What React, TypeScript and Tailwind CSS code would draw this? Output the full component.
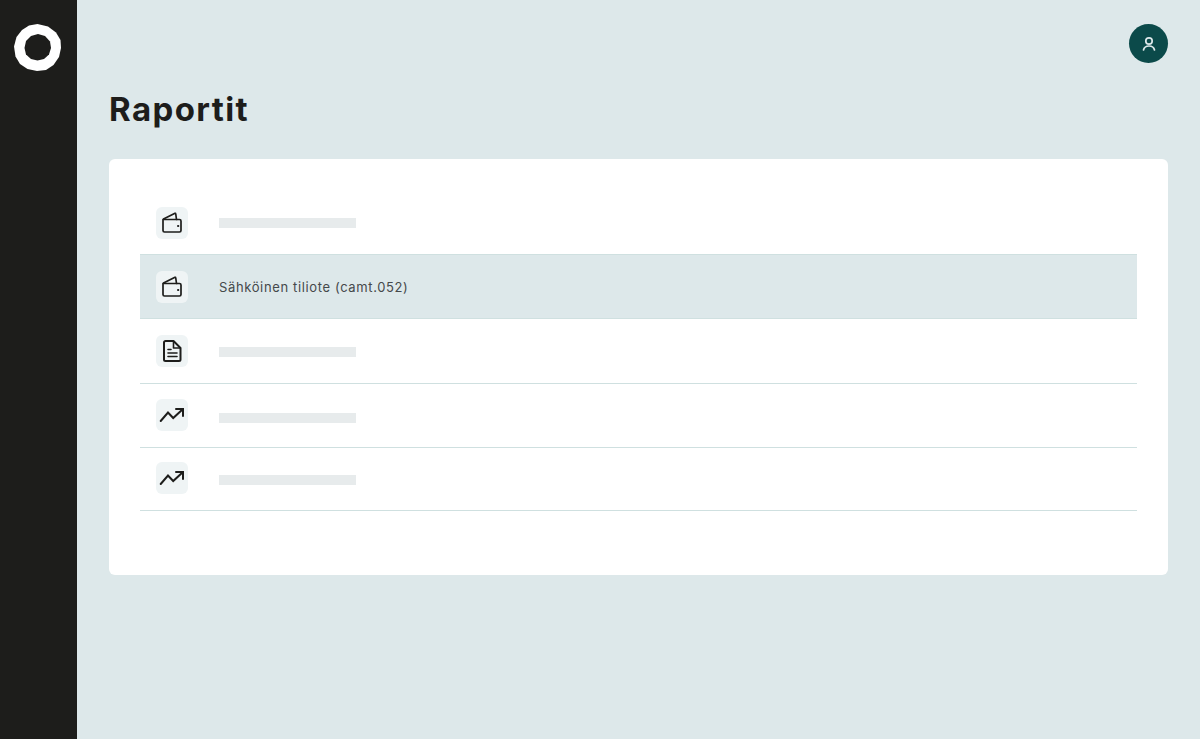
import React from "react";

const Wallet = () => (
  <svg width="22" height="22" viewBox="0 0 22 22" fill="none" stroke="#1d1d1b" strokeWidth="1.7" strokeLinejoin="round" strokeLinecap="round">
    <path d="M2 7.500v11a1.500 1.500 0 0 0 1.500 1.500h15a1.500 1.500 0 0 0 1.500-1.500v-9.500a1.500 1.500 0 0 0-1.500-1.500H3a1 1 0 0 0-1 .5Z" />
    <path d="M2.500 7 14 1.300a.5.5 0 0 1 .7.400L15.500 7.500" />
    <path d="M17 14h.3" strokeWidth="2" />
  </svg>
);

const Doc = () => (
  <svg width="22" height="22" viewBox="0 0 22 22" fill="none" stroke="#1d1d1b" strokeWidth="2" strokeLinejoin="round" strokeLinecap="round">
    <path d="M3 2.500A1.500 1.500 0 0 1 4.500 1H12.500L19.500 8V19.500A1.500 1.500 0 0 1 18 21H4.500A1.500 1.500 0 0 1 3 19.500Z" />
    <path d="M12.500 1.500V8H19" strokeWidth="1.600" />
    <path d="M7 9.500h3M7 13h9M7 16.500h9" strokeWidth="1.600" />
  </svg>
);

const Trend = () => (
  <svg width="26" height="26" viewBox="0 0 26 26" fill="none" stroke="#1d1d1b" strokeWidth="2" strokeLinejoin="miter" strokeLinecap="round">
    <path d="M1.700 19 9 10.500l5.200 5.500L24 7" />
    <path d="M17 7h7v7" />
  </svg>
);

function Row({
  icon,
  label,
  active,
  rowClass,
  iconClass,
  barClass,
}: {
  icon: React.ReactNode;
  label?: string;
  active?: boolean;
  rowClass: string;
  iconClass: string;
  barClass?: string;
}) {
  return (
    <div className={`flex items-start gap-[31px] border-b border-[#cfe0e0] px-4 ${rowClass} ${active ? "bg-[#dde8ea]" : ""}`}>
      <div className={`flex h-8 w-8 shrink-0 items-center justify-center rounded-md bg-[#eff4f5] ${iconClass}`}>{icon}</div>
      {label ? (
        <span className="mt-[24px] text-[13px] leading-[16px] tracking-[0.63px] text-[#45494a]">{label}</span>
      ) : (
        <div className={`h-[10px] w-[137px] bg-[#e7ebec] ${barClass ?? ""}`} />
      )}
    </div>
  );
}

export default function App() {
  return (
    <div className="flex h-[739px] w-full overflow-hidden bg-[#dde8ea] font-['Inter',sans-serif]">
      <aside className="w-[77px] shrink-0 bg-[#1d1d1b] pt-6 pl-[14px]">
        <svg width="47" height="47" viewBox="0 0 47 47" fill="none">
          <polygon
            points="23.500,0 34,2.500 42,8.500 46.500,16 47,24 45,33 39.500,41 32,46 23,47 13.500,45 6,40 1.500,32.500 0,22.500 2.500,13 8,6 15,1.500"
            fill="#fff"
          />
          <polygon
            points="24,10 31,12 36,17.500 37,24 35,30.500 30,35 23.500,36.500 17,35 12,30.500 10.500,24 12,17 17,12"
            fill="#1d1d1b"
          />
        </svg>
      </aside>
      <main className="flex-1 pr-8 pl-8">
        <div className="flex justify-end pt-6">
          <div className="flex h-[39px] w-[39px] items-center justify-center rounded-full bg-[#0b4a4a]">
            <svg width="18" height="18" viewBox="0 0 18 18" fill="none" stroke="#dde8ea" strokeWidth="1.700" strokeLinecap="round">
              <circle cx="9" cy="6" r="3.200" />
              <path d="M3.500 15c.6-2.600 2.800-4 5.500-4s4.900 1.400 5.500 4" />
            </svg>
          </div>
        </div>
        <h1 className="mt-[25px] text-[33px] leading-[42px] font-bold tracking-[1.4px] text-[#1d1d1b]">Raportit</h1>
        <div className="mt-[29px] h-[416px] rounded-md bg-white px-[31px] pt-8">
          <Row icon={<Wallet />} rowClass="h-[64px]" iconClass="mt-4" barClass="mt-[27px]" />
          <Row icon={<Wallet />} label="Sähköinen tiliote (camt.052)" active rowClass="h-[64px]" iconClass="mt-4" />
          <Row icon={<Doc />} rowClass="h-[65px]" iconClass="mt-4" barClass="mt-[28px]" />
          <Row icon={<Trend />} rowClass="h-[64px]" iconClass="mt-[15px]" barClass="mt-[29px]" />
          <Row icon={<Trend />} rowClass="h-[63px]" iconClass="mt-[14px]" barClass="mt-[27px]" />
        </div>
      </main>
    </div>
  );
}
